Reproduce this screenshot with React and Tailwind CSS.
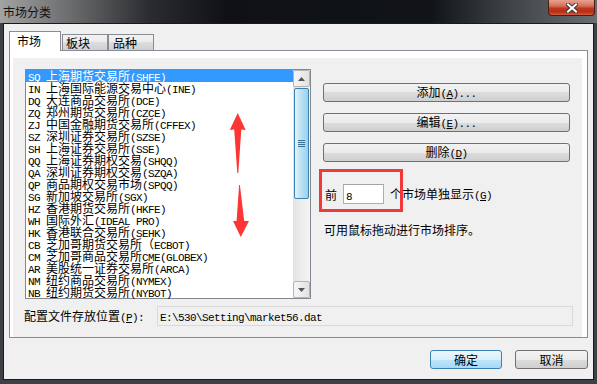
const rows = [
  "SQ 上海期货交易所(SHFE)",
  "IN 上海国际能源交易中心(INE)",
  "DQ 大连商品交易所(DCE)",
  "ZQ 郑州期货交易所(CZCE)",
  "ZJ 中国金融期货交易所(CFFEX)",
  "SZ 深圳证券交易所(SZSE)",
  "SH 上海证券交易所(SSE)",
  "QQ 上海证券期权交易(SHQQ)",
  "QA 深圳证券期权交易(SZQA)",
  "QP 商品期权交易市场(SPQQ)",
  "SG 新加坡交易所(SGX)",
  "HZ 香港期货交易所(HKFE)",
  "WH 国际外汇(IDEAL PRO)",
  "HK 香港联合交易所(SEHK)",
  "CB 芝加哥期货交易所（ECBOT)",
  "CM 芝加哥商品交易所CME(GLOBEX)",
  "AR 美股统一证券交易所(ARCA)",
  "NM 纽约商品交易所(NYMEX)",
  "NB 纽约期货交易所(NYBOT)",
];

// ascii in a 6px mono cell, everything else in the CJK face; "&X" underlines X
function T({ s }) {
  const parts = s.match(/[\x00-\x7f]+|[^\x00-\x7f]+/g) || [];
  return (
    <span className="whitespace-pre">
      {parts.map((p, i) => {
        if (/^[\x00-\x7f]/.test(p)) {
          const bits = p.split(/&(.)/);
          return (
            <span key={i} className="font-['Liberation_Mono',monospace] text-[11px] tracking-[-0.6px]">
              {bits.map((b, j) => (j % 2 ? <u key={j}>{b}</u> : b))}
            </span>
          );
        }
        return (
          <span key={i} className="font-['Noto_Sans_CJK_SC',sans-serif] text-[12px]">
            {p}
          </span>
        );
      })}
    </span>
  );
}

function Button({ label, primary = false, className = "" }) {
  return (
    <div
      className={
        "h-[19px] flex items-center justify-center rounded-[3px] border leading-[12px] text-black " +
        (primary
          ? "border-[#3c7fb1] bg-[linear-gradient(#eaf6fd_0%,#d9f0fc_50%,#bee6fd_50%,#a7d9f5_100%)] "
          : "border-[#707070] bg-[linear-gradient(#f2f2f2_0%,#ebebeb_50%,#dddddd_50%,#cfcfcf_100%)] ") +
        className
      }
    >
      <T s={label} />
    </div>
  );
}

function ScrollBtn({ up }) {
  return (
    <div className="h-[17px] flex items-center justify-center border border-[#b4b4b4] rounded-[2px] bg-[linear-gradient(90deg,#f6f6f6,#e2e2e2)]">
      <svg width="7" height="4" viewBox="0 0 7 4">
        <path d={up ? "M0 4 L3.5 0 L7 4 Z" : "M0 0 L3.5 4 L7 0 Z"} fill="#555" />
      </svg>
    </div>
  );
}

export default function App() {
  return (
    <div className="relative w-[597px] h-[384px] overflow-hidden bg-[#3d4044] select-none">
      {/* title bar */}
      <div className="h-[23px] flex items-start bg-[linear-gradient(90deg,#a3a3a3_0%,#6a6b6d_12%,#2a2c2f_25%,#0f1115_38%,#101317_72%,#3e4246_85%,#6a6e72_100%)]">
        <div className="ml-[3px] mt-[5px] leading-[12px] text-[#111]">
          <T s="市场分类" />
        </div>
        <div className="ml-auto mr-[2px] w-[47px] h-[16px] flex items-center justify-center rounded-b-[4px] border border-t-0 border-[#4a1c12] bg-[linear-gradient(#e6a290_0%,#d6705a_40%,#c2361e_55%,#b52f18_78%,#d45a3c_100%)]">
          <svg width="12" height="10" viewBox="0 0 12 10">
            <path d="M2 1.5 L10 8.5 M10 1.5 L2 8.5" stroke="#3a3a3a" strokeWidth="4" strokeLinecap="square" />
            <path d="M2 1.5 L10 8.5 M10 1.5 L2 8.5" stroke="#ffffff" strokeWidth="2" strokeLinecap="square" />
          </svg>
        </div>
      </div>

      {/* dialog body */}
      <div className="mx-[3px] h-[357px] border border-[#1a1a1a] bg-[#f0f0f0] flex flex-col">
        {/* tabs */}
        <div className="relative z-10 mt-[7px] ml-[5px] h-[19px] flex items-end">
          <div className="self-start h-[20px] w-[52px] border border-b-0 border-[#898c95] bg-white pl-[7px] pt-[2px] leading-[12px]">
            <T s="市场" />
          </div>
          <div className="ml-px h-[16px] w-[46px] border border-b-0 border-[#898c95] bg-[linear-gradient(#f2f2f2_0%,#ebebeb_50%,#dddddd_50%,#cfcfcf_100%)] pl-[3px] pt-px leading-[12px]">
            <T s="板块" />
          </div>
          <div className="h-[16px] w-[46px] border border-b-0 border-[#898c95] bg-[linear-gradient(#f2f2f2_0%,#ebebeb_50%,#dddddd_50%,#cfcfcf_100%)] pl-[4px] pt-px leading-[12px]">
            <T s="品种" />
          </div>
        </div>

        {/* tab page */}
        <div className="ml-[5px] w-[579px] h-[288px] border border-[#898c95] bg-white pl-[3px] pt-[7px] pr-[5px] flex flex-col">
          <div className="flex-1 bg-[#f0f0f0] pt-[11px] pl-[12px] text-black">
            <div className="flex">
              {/* market list */}
              <div className="w-[286px] h-[230px] border border-[#828790] bg-white flex">
                <div className="w-[267px]">
                  {rows.map((r, i) => (
                    <div
                      key={r}
                      className={
                        "h-[12px] leading-[12px] pl-[2px] flex items-center " +
                        (i === 0 ? "bg-[#3399ff] text-white" : "text-black")
                      }
                    >
                      <T s={r} />
                    </div>
                  ))}
                </div>
                <div className="w-[17px] flex flex-col bg-[linear-gradient(90deg,#e3e3e3,#f5f5f5)]">
                  <ScrollBtn up />
                  <div className="mt-px mx-px h-[111px] rounded-[2px] border border-[#3c7fb1] bg-[linear-gradient(90deg,#e3f4fc_0%,#c4e5f6_35%,#98d1ef_100%)] flex flex-col items-center justify-center gap-px">
                    <div className="w-[7px] h-px bg-[#3c6f96]" />
                    <div className="w-[7px] h-px bg-[#3c6f96]" />
                    <div className="w-[7px] h-px bg-[#3c6f96]" />
                    <div className="w-[7px] h-px bg-[#3c6f96]" />
                  </div>
                  <div className="flex-1" />
                  <ScrollBtn />
                </div>
              </div>

              {/* right column */}
              <div className="ml-[12px] w-[247px] pt-[14px] flex flex-col">
                <Button label="添加(&A)..." />
                <Button label="编辑(&E)..." className="mt-[11px]" />
                <Button label="删除(&D)" className="mt-[11px]" />
                <div className="mt-[22px] h-[20px] pl-[2px] flex items-center leading-[12px]">
                  <T s="前" />
                  <div className="ml-[6px] w-[41px] h-[20px] border border-[#abadb3] border-t-[#a0a4ab] bg-white pl-[2px] pt-[3px] leading-[12px]">
                    <T s="8" />
                  </div>
                  <div className="ml-[6px]">
                    <T s="个市场单独显示(&G)" />
                  </div>
                </div>
                <div className="mt-[19px] pl-px h-[12px] leading-[12px]">
                  <T s="可用鼠标拖动进行市场排序。" />
                </div>
              </div>
            </div>

            {/* config path */}
            <div className="mt-[7px] -ml-px h-[20px] flex items-center leading-[12px]">
              <div className="w-[133px]">
                <T s="配置文件存放位置(&P):" />
              </div>
              <div className="w-[416px] h-[20px] border border-[#d9d9d9] bg-[#f0f0f0] pl-[2px] flex items-center leading-[12px]">
                <T s="E:\530\Setting\market56.dat" />
              </div>
            </div>
          </div>
        </div>

        {/* dialog buttons */}
        <div className="mt-[12px] pr-[5px] flex justify-end gap-[13px]">
          <Button label="确定" primary className="w-[72px]" />
          <Button label="取消" className="w-[73px]" />
        </div>
      </div>

      {/* red annotations drawn over the screenshot */}
      <div className="absolute left-[319px] top-[169px] w-[84px] h-[43px] border-[3px] border-[#f03a3a]" />
      <svg className="absolute inset-0 pointer-events-none" width="597" height="384" viewBox="0 0 597 384">
        <polygon
          points="237.7,113 245.7,130 241.3,129.5 238.3,173 237.3,173 234.2,129.5 229.8,130"
          fill="#fd3535"
        />
        <polygon
          points="239.1,185 239.9,185 244.2,221 249,221 240.8,237 233,221 236.6,221"
          fill="#fd3535"
        />
      </svg>
    </div>
  );
}
